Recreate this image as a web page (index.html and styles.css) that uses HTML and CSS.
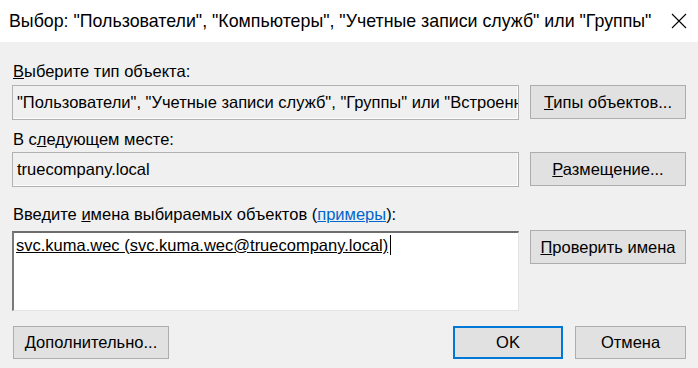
FILE: index.html
```html
<!DOCTYPE html>
<html lang="ru">
<head>
  <meta charset="UTF-8" />
  <title>Выбор объектов</title>
  <link rel="stylesheet" href="styles.css">
</head>
<body>
  <div class="dialog">
    <!-- Title bar -->
    <div class="title-bar">
      <span class="title">Выбор: "Пользователи", "Компьютеры", "Учетные записи служб" или "Группы"</span>
      <svg class="close" width="16" height="16" viewBox="0 0 16 16">
        <path d="M1 1 L15 15 M15 1 L1 15" stroke="#000" stroke-width="1.1" fill="none"/>
      </svg>
    </div>

    <div class="content">
      <div class="label"><u>В</u>ыберите тип объекта:</div>
      <div class="row">
        <div class="edit readonly">"Пользователи", "Учетные записи служб", "Группы" или "Встроенные субъекты безопасности"</div>
        <div class="btn"><span><u>Т</u>ипы объектов...</span></div>
      </div>

      <div class="label second">В с<u>л</u>едующем месте:</div>
      <div class="row">
        <div class="edit readonly">truecompany.local</div>
        <div class="btn"><span><u>Р</u>азмещение...</span></div>
      </div>

      <div class="label third">Введите <u>и</u>мена выбираемых объектов (<a class="link" href="#">примеры</a>):</div>
      <div class="row top">
        <div class="memo"><span class="resolved">svc.kuma.wec (svc.kuma.wec@truecompany.local)</span><span class="caret"></span></div>
        <div class="btn"><span><u>П</u>роверить имена</span></div>
      </div>

      <div class="footer">
        <div class="btn wide"><span><u>Д</u>ополнительно...</span></div>
        <div class="footer-right">
          <div class="btn ok">OK</div>
          <div class="btn cancel">Отмена</div>
        </div>
      </div>
    </div>
    <div class="grip"></div>
  </div>
</body>
</html>
```

FILE: styles.css
```css
body {
  margin: 0;
  font-family: "Liberation Sans", Arial, sans-serif;
  color: #000;
}

.dialog {
  position: relative;
  width: 698px;
  height: 368px;
  background: #f0f0f0;
  overflow: hidden;
}

.title-bar {
  height: 42px;
  background: #fff;
  display: flex;
  align-items: center;
  padding-left: 9px;
  font-size: 17.8px;
}

.title {
  flex: 1;
  white-space: nowrap;
}

.close {
  margin-right: 11px;
}

.content {
  padding: 19px 12px 0 12px;
  font-size: 16.5px;
}

.label {
  height: 20px;
  line-height: 20px;
  padding-left: 1px;
  margin-bottom: 4px;
  white-space: nowrap;
}

.label.second {
  margin-top: 9px;
  margin-bottom: 3px;
}

.label.third {
  margin-top: 17px;
  margin-bottom: 6px;
}

.link {
  color: #0066cc;
}

.row {
  display: grid;
  grid-template-columns: 507px 156px;
  column-gap: 11px;
  align-items: start;
}

.edit {
  height: 35px;
  box-sizing: border-box;
  border: 1px solid #b1b1b1;
  box-shadow: inset -1px -1px 0 #fdfdfd;
  padding: 0 4px;
  line-height: 33px;
  white-space: nowrap;
  overflow: hidden;
}

.memo {
  height: 80px;
  margin-top: 1px;
  box-sizing: border-box;
  background: #fff;
  border-style: solid;
  border-width: 2px 1px 1px 2px;
  border-color: #6d6d6d #e3e3e3 #e3e3e3 #7a7a7a;
  padding: 1px 2px;
  line-height: 22px;
  white-space: nowrap;
}

.resolved {
  text-decoration: underline;
}

.caret {
  display: inline-block;
  width: 1px;
  height: 20px;
  background: #000;
  vertical-align: -4px;
  margin-left: 2px;
}

.btn {
  height: 34px;
  box-sizing: border-box;
  background: #e1e1e1;
  border: 1px solid #adadad;
  display: flex;
  align-items: center;
  justify-content: center;
  white-space: nowrap;
}

.footer {
  display: flex;
  justify-content: space-between;
  margin-top: 15px;
  padding-left: 1px;
}

.footer .btn {
  height: 33px;
}

.btn.wide {
  width: 156px;
}

.footer-right {
  display: flex;
  gap: 12px;
}

.btn.ok {
  width: 110px;
  border: 2px solid #0078d7;
}

.btn.cancel {
  width: 111px;
}

.grip {
  position: absolute;
  right: 2px;
  bottom: 2px;
  width: 4px;
  height: 4px;
  background: radial-gradient(circle, #b8b8b8 40%, transparent 45%) 0 0 / 2px 2px;
}
```
